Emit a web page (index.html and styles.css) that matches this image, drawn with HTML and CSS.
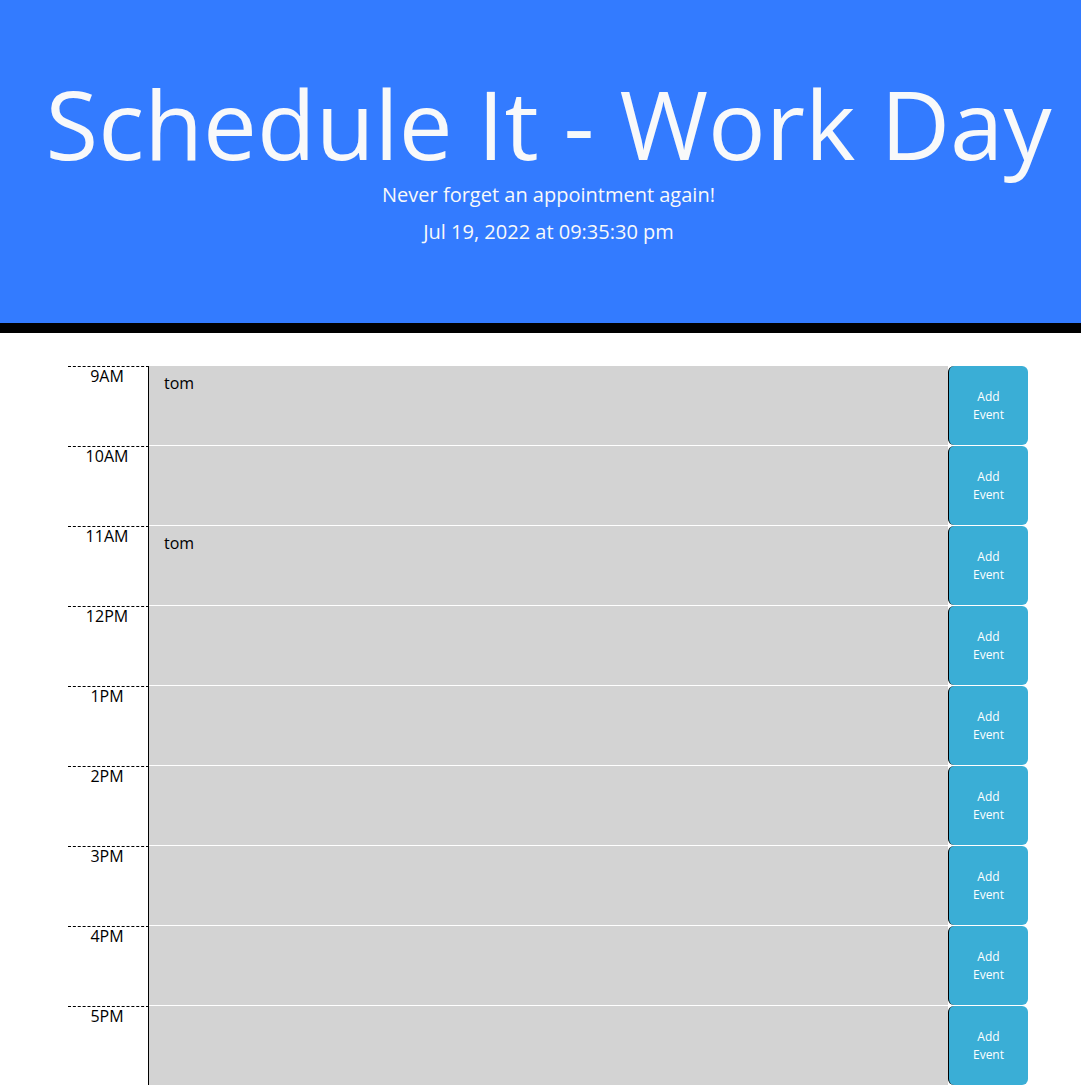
FILE: index.html
```html
<!DOCTYPE html>
<html lang="en">
<head>
<meta charset="utf-8">
<title>Schedule It - Work Day</title>
<link rel="stylesheet" href="styles.css">
</head>
<body>
<header class="jumbotron">
  <h1 class="title">Schedule It - Work Day</h1>
  <p class="lead">Never forget an appointment again!</p>
  <p class="current-day">Jul 19, 2022 at 09:35:30 pm</p>
</header>
<main class="container">
  <div class="row"><div class="hour">9AM</div><div class="description">tom</div><button class="saveBtn">Add<br>Event</button></div>
  <div class="row"><div class="hour">10AM</div><div class="description"></div><button class="saveBtn">Add<br>Event</button></div>
  <div class="row"><div class="hour">11AM</div><div class="description">tom</div><button class="saveBtn">Add<br>Event</button></div>
  <div class="row"><div class="hour">12PM</div><div class="description"></div><button class="saveBtn">Add<br>Event</button></div>
  <div class="row"><div class="hour">1PM</div><div class="description"></div><button class="saveBtn">Add<br>Event</button></div>
  <div class="row"><div class="hour">2PM</div><div class="description"></div><button class="saveBtn">Add<br>Event</button></div>
  <div class="row"><div class="hour">3PM</div><div class="description"></div><button class="saveBtn">Add<br>Event</button></div>
  <div class="row"><div class="hour">4PM</div><div class="description"></div><button class="saveBtn">Add<br>Event</button></div>
  <div class="row"><div class="hour">5PM</div><div class="description"></div><button class="saveBtn">Add<br>Event</button></div>
</main>
</body>
</html>
```
FILE: styles.css
```css
* { box-sizing: border-box; }
body {
  margin: 0;
  font-family: "Open Sans", "Noto Sans", sans-serif;
  background: #ffffff;
  color: #000;
}
.jumbotron {
  background: #337bff;
  color: #f8f9fa;
  text-align: center;
  height: 333px;
  padding: 68px 0 0 16px;
  border-bottom: 10px solid #000;
}
.title {
  margin: 0;
  font-size: 96px;
  font-weight: 400;
  line-height: 109px;
}
.lead {
  margin: 0;
  font-size: 20px;
  line-height: 36px;
}
.current-day {
  margin: 0;
  font-size: 20px;
  line-height: 38px;
}
.container {
  margin: 33px 0 0 68px;
  width: 960px;
}
.row {
  display: flex;
  height: 80px;
}
.hour {
  width: 81px;
  flex: none;
  border-top: 1px dashed #000;
  border-right: 1px solid #000;
  text-align: center;
  font-size: 16px;
  line-height: 19px;
  padding-right: 2px;
}
.description {
  flex: 1;
  background: #d3d3d3;
  border-bottom: 1px solid #fff;
  padding: 8px 15px;
  font-size: 16px;
  line-height: 19px;
}
.saveBtn {
  width: 80px;
  flex: none;
  height: 79px;
  background: #3aaed6;
  color: #fff;
  border: none;
  border-left: 1px solid #000;
  border-radius: 6px;
  font-family: "Open Sans", "Noto Sans", sans-serif;
  font-size: 12px;
  line-height: 18px;
  padding: 0;
}
```
